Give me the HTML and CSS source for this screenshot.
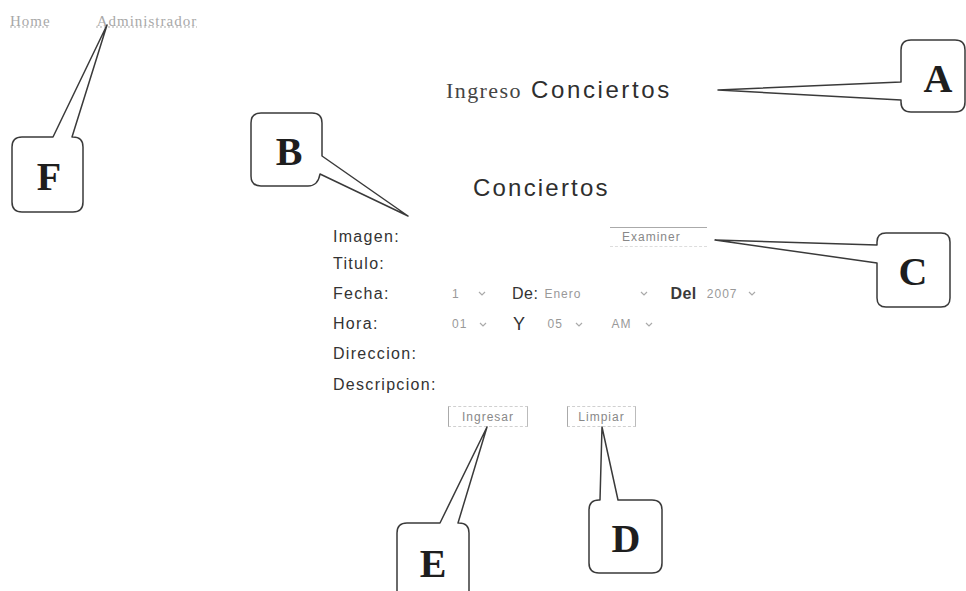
FILE: index.html
```html
<!DOCTYPE html>
<html>
  <head>
    <title>Ingreso Conciertos</title>
    <link rel="stylesheet" href="styles.css">
  </head>
  <body>
    <div class="page">
      <nav class="menu">
        <a href="#">Home</a>
        <a href="#">Administrador</a>
      </nav>

      <h1 class="title"><span class="serif">Ingreso</span> Conciertos</h1>
      <h2 class="subtitle">Conciertos</h2>

      <form class="concert-form">
        <label>Imagen:</label>
        <div class="field">
          <span class="file-box"></span>
          <button type="button" class="browse">Examiner</button>
        </div>

        <label>Titulo:</label>
        <div class="field"></div>

        <label>Fecha:</label>
        <div class="field">
          <span class="sel day">1 <svg class="chev" viewBox="0 0 8 5"><path d="M1 1l3 3 3-3"/></svg></span>
          <span class="word de">De:</span>
          <span class="sel month">Enero <svg class="chev" viewBox="0 0 8 5"><path d="M1 1l3 3 3-3"/></svg></span>
          <span class="word del">Del</span>
          <span class="sel year">2007 <svg class="chev" viewBox="0 0 8 5"><path d="M1 1l3 3 3-3"/></svg></span>
        </div>

        <label>Hora:</label>
        <div class="field">
          <span class="sel hour">01 <svg class="chev" viewBox="0 0 8 5"><path d="M1 1l3 3 3-3"/></svg></span>
          <span class="word y">Y</span>
          <span class="sel minute">05 <svg class="chev" viewBox="0 0 8 5"><path d="M1 1l3 3 3-3"/></svg></span>
          <span class="sel ampm">AM <svg class="chev" viewBox="0 0 8 5"><path d="M1 1l3 3 3-3"/></svg></span>
        </div>

        <label>Direccion:</label>
        <div class="field"></div>

        <label>Descripcion:</label>
        <div class="field"></div>

        <div class="actions">
          <button type="button" class="btn">Ingresar</button>
          <button type="button" class="btn">Limpiar</button>
        </div>
      </form>

      <!-- callouts drawn over the page -->
      <svg class="callouts" viewBox="0 0 966 591">
        <path d="M911 40H955Q965 40 965 50V102Q965 112 955 112H911Q901 112 901 102V100L718 90L901 82V50Q901 40 911 40Z"/>
        <text x="938" y="92">A</text>

        <path d="M261 113H312Q322 113 322 123V156L408 216L320 174Q318 186 308 186H261Q251 186 251 176V123Q251 113 261 113Z"/>
        <text x="289" y="165">B</text>

        <path d="M886 233H941Q950 233 950 242V298Q950 307 941 307H886Q877 307 877 298V263L715 240L877 245V242Q877 233 886 233Z"/>
        <text x="913" y="285">C</text>

        <path d="M599 500H600L602 427L618 500H652Q662 500 662 510V563Q662 573 652 573H599Q589 573 589 563V510Q589 500 599 500Z"/>
        <text x="626" y="552">D</text>

        <path d="M407 523H440L487 427L458 523H459Q469 523 469 533V600H397V533Q397 523 407 523Z"/>
        <text x="433" y="577">E</text>

        <path d="M22 137H53L107 25L72 137H73Q83 137 83 147V202Q83 212 73 212H22Q12 212 12 202V147Q12 137 22 137Z"/>
        <text x="49" y="190">F</text>
      </svg>
    </div>
  </body>
</html>
```

FILE: styles.css
```css
body {
  margin: 0;
  background: #fff;
  font-family: "Liberation Sans", Arial, sans-serif;
  color: #333;
  overflow: hidden;
}

.page {
  position: relative;
  width: 966px;
  height: 591px;
}

.menu {
  display: flex;
  gap: 46px;
  padding: 12px 0 0 10px;
  font-family: "Liberation Serif", "Times New Roman", serif;
  font-size: 15px;
  line-height: 18px;
  letter-spacing: 1px;
}

.menu a {
  color: #a8a8a8;
  text-decoration: underline dotted #c8c8c8;
}

.title {
  margin: 47px 0 0 446px;
  font-size: 24px;
  line-height: 26px;
  font-weight: normal;
  letter-spacing: 2.6px;
  color: #2e2e2e;
}

.title .serif {
  font-family: "Liberation Serif", "Times New Roman", serif;
  font-size: 22px;
  letter-spacing: 1.4px;
  color: #444;
}

.subtitle {
  margin: 70px 0 0 473px;
  font-size: 24px;
  line-height: 28px;
  font-weight: normal;
  letter-spacing: 2.2px;
  color: #2e2e2e;
}

.concert-form {
  display: grid;
  grid-template-columns: 117px 400px;
  grid-template-rows: 27px 28px 31px 30px 30px 31px;
  align-items: center;
  margin: 21px 0 0 333px;
  font-size: 16px;
  letter-spacing: 1.3px;
}

.concert-form label {
  color: #333;
}

.field {
  display: flex;
  align-items: center;
  font-size: 12px;
  letter-spacing: 1px;
}

.file-box {
  width: 160px;
}

.browse {
  width: 97px;
  height: 20px;
  padding: 0 0 0 12px;
  text-align: left;
  background: #fff;
  border: 0;
  border-top: 1px solid #aaa;
  border-bottom: 1px dashed #ddd;
  font-family: inherit;
  font-size: 12px;
  letter-spacing: 1px;
  color: #888;
}

.sel {
  display: flex;
  align-items: center;
  justify-content: space-between;
  padding-left: 2px;
  color: #999;
  box-sizing: border-box;
}

.chev {
  width: 8px;
  height: 5px;
  fill: none;
  stroke: #aaa;
  stroke-width: 1.2;
}

.sel.day { width: 36px; }
.sel.month { width: 106px; margin-left: 4px; }
.sel.year { width: 51px; margin-left: 8px; }
.sel.hour { width: 37px; }
.sel.minute { width: 37px; margin-left: 20px; }
.sel.ampm { width: 43px; margin-left: 27px; }

.word {
  font-size: 16px;
  letter-spacing: 0.5px;
  color: #333;
}

.word.de { margin-left: 26px; }
.word.del { margin-left: 22px; font-weight: bold; color: #3a3a3a; }
.word.y { margin-left: 26px; font-size: 18px; }

.actions {
  grid-column: 1 / 3;
  display: flex;
  gap: 39px;
  padding-left: 115px;
  margin-top: 6px;
}

.btn {
  width: 80px;
  height: 21px;
  padding: 0;
  background: #fff;
  border: 1px dashed #d0d0d0;
  border-left: 1px solid #aaa;
  border-right: 1px solid #bbb;
  font-family: inherit;
  font-size: 12px;
  letter-spacing: 1px;
  color: #888;
}

.btn + .btn {
  width: 69px;
}

.callouts {
  position: absolute;
  top: 0;
  left: 0;
  width: 966px;
  height: 591px;
  pointer-events: none;
}

.callouts path {
  fill: #fff;
  stroke: #3a3a3a;
  stroke-width: 1.5;
  stroke-linejoin: round;
}

.callouts text {
  font-family: "Liberation Serif", "Times New Roman", serif;
  font-weight: bold;
  font-size: 40px;
  text-anchor: middle;
  fill: #1e1e1e;
}
```
